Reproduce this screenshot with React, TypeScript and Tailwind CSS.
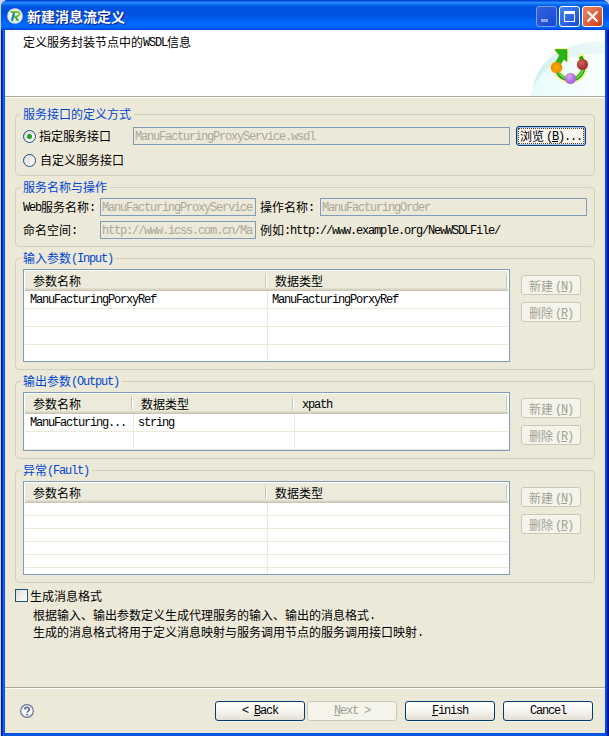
import type { ReactNode } from "react";

const cjk = "font-['Noto_Sans_CJK_SC',sans-serif]";

/* Half-width slab mono: every Latin character advances 6px. */
const latin = "font-['Liberation_Mono',monospace] text-[12px] leading-none tracking-[-1.2px] align-[1px]";

/* Chinese runs use the CJK face, Latin runs use the half-width face. */
function Mixed({ text }: { text: string }) {
  const runs = text.match(/[\x20-\x7e]+|[^\x20-\x7e]+/g) ?? [];
  return (
    <>
      {runs.map((run, i) =>
        /^[\x20-\x7e]/.test(run) ? (
          <span key={i} className={latin}>
            {run}
          </span>
        ) : (
          <span key={i}>{run}</span>
        ),
      )}
    </>
  );
}

function Group({ title, className, children }: { title: string; className: string; children: ReactNode }) {
  return (
    <section className={`ml-[10px] flex w-[580px] shrink-0 flex-col rounded-[4px] border border-[#d0d0bf] ${className}`}>
      <h2 className="-mt-[8px] ml-[5px] h-[14px] w-fit shrink-0 bg-[#ece9d8] pr-[3px] pl-[2px] leading-[14px] whitespace-pre text-[#0046d5]">
        <Mixed text={title} />
      </h2>
      {children}
    </section>
  );
}

function Field({ value, className }: { value: string; className: string }) {
  return (
    <div className={`h-[18px] shrink-0 overflow-hidden border border-[#7f9db9] pl-[1px] leading-[15px] whitespace-pre text-[#aca899] ${className}`}>
      <Mixed text={value} />
    </div>
  );
}

function Radio({ checked }: { checked?: boolean }) {
  return (
    <span className="flex size-[13px] shrink-0 items-center justify-center rounded-full border border-[#1c5180] bg-linear-to-br from-[#dcdcd7] to-white">
      {checked && <span className="size-[5px] rounded-full bg-[#21a121]" />}
    </span>
  );
}

function SideButton({ label, hotkey }: { label: string; hotkey: string }) {
  return (
    <button className="h-[20px] w-[60px] rounded-[3px] border border-[#c9c7ba] bg-[#f5f4ea] text-center leading-[17px] whitespace-pre text-[#a1a192]">
      {label}
      <span className={`ml-[2px] ${latin}`}>
        (<u>{hotkey}</u>)
      </span>
    </button>
  );
}

function SideButtons() {
  return (
    <div className="mt-[6px] ml-[11px] flex flex-col gap-[7px]">
      <SideButton label="新建" hotkey="N" />
      <SideButton label="删除" hotkey="R" />
    </div>
  );
}

type Column = { name: string; width: string };

function Table({ columns, rows, rowHeight, height }: { columns: Column[]; rows: string[][]; rowHeight: string; height: string }) {
  return (
    <div className={`flex w-[487px] shrink-0 flex-col overflow-hidden border border-[#7f9db9] bg-white px-px pt-px ${height}`}>
      <div className="flex h-[20px] shrink-0 items-center border-b border-[#cbc7b8] bg-[linear-gradient(#ebeadb_0_17px,#e2decd_17px_18px,#d6d2c2_18px)]">
        {columns.map((c, i) => (
          <div
            key={i}
            className={`flex h-[13px] shrink-0 items-center border-r border-white leading-[14px] ${c.width} ${i === 0 ? "-ml-[1px] pl-[9px]" : "pl-[8px]"}`}
          >
            <span className="flex-1 whitespace-pre">
              <Mixed text={c.name} />
            </span>
            <span className="h-[13px] w-px bg-[#c7c5b2]" />
          </div>
        ))}
      </div>
      {rows.map((row, r) => (
        <div key={r} className={`flex shrink-0 border-b border-[#ece9d8] ${rowHeight}`}>
          {columns.map((c, i) => (
            <div
              key={i}
              className={`shrink-0 leading-[16px] whitespace-pre ${c.width} ${i === 0 ? "pl-[5px]" : "pl-[4px]"} ${i < columns.length - 1 ? "border-r border-[#ece9d8]" : ""}`}
            >
              <Mixed text={row[i] ?? ""} />
            </div>
          ))}
        </div>
      ))}
    </div>
  );
}

const pairColumns: Column[] = [
  { name: "参数名称", width: "w-[243px]" },
  { name: "数据类型", width: "w-[241px]" },
];

const outputColumns: Column[] = [
  { name: "参数名称", width: "w-[109px]" },
  { name: "数据类型", width: "w-[161px]" },
  { name: "xpath", width: "w-[214px]" },
];

function WizardButton({ children, disabled, className }: { children: ReactNode; disabled?: boolean; className: string }) {
  const look = disabled
    ? "border-[#c9c7ba] bg-[#f5f4ea] text-[#a1a192]"
    : "border-[#003c74] bg-linear-to-b from-white via-[#f6f5f0] to-[#e3dfd3] text-black shadow-[0_1px_0_#f8f7f1]";
  return (
    <button
      className={`flex h-[20px] w-[90px] items-center justify-center rounded-[3px] border font-['Liberation_Mono',monospace] text-[12px] leading-[18px] tracking-[-1.2px] whitespace-pre ${look} ${className}`}
    >
      {children}
    </button>
  );
}

function AppIcon() {
  return (
    <svg width="16" height="16" viewBox="0 0 16 16" className="shrink-0">
      <circle cx="8" cy="8" r="7.8" fill="#dfe3df" />
      <circle cx="8" cy="8" r="6.6" fill="#f4f3ee" />
      <path d="M3.5 4h7.2c2.7 0 2.3 3.6-.4 4.2L7 8.7" fill="none" stroke="#7cc42c" strokeWidth="2" />
      <path d="M7 4.5 5 13" stroke="#1487a8" strokeWidth="2.2" />
      <path d="m8.5 9 2.7 3.8" stroke="#42a55c" strokeWidth="2.2" />
    </svg>
  );
}

function FlowBanner() {
  return (
    <svg width="76" height="58" viewBox="0 0 76 58" className="shrink-0">
      <defs>
        <linearGradient id="rim" x1="0" y1="1" x2="1" y2="0">
          <stop offset="0" stopColor="#c5ecef" />
          <stop offset="1" stopColor="#f0fafa" />
        </linearGradient>
        <linearGradient id="disc" x1="0" y1="0" x2="1" y2="0">
          <stop offset="0" stopColor="#e8fbfc" />
          <stop offset="1" stopColor="#fbffff" />
        </linearGradient>
        <radialGradient id="orange">
          <stop offset="0" stopColor="#ffac00" />
          <stop offset="1" stopColor="#e38c08" />
        </radialGradient>
        <radialGradient id="violet" cx="40%" cy="35%">
          <stop offset="0" stopColor="#dca6ff" />
          <stop offset="1" stopColor="#ae66e0" />
        </radialGradient>
        <radialGradient id="red" cx="40%" cy="35%">
          <stop offset="0" stopColor="#d3605c" />
          <stop offset="1" stopColor="#a93337" />
        </radialGradient>
      </defs>
      <path d="M4 51C7 24 32 3 76 3v55H2z" fill="url(#rim)" />
      <path d="M1 58C8 33 32 14 76 16v42z" fill="url(#disc)" />
      <g fill="none" stroke="#f8f6a8" strokeLinejoin="round" strokeLinecap="round">
        <path d="M28 29v2c1 8 7 11 14 11 8 0 13-7 13-14 0-4-1-6-3-9" strokeWidth="7" />
        <path d="m28 26 4-8M27 12h11v11z" strokeWidth="4" />
        <circle cx="27.500" cy="29.500" r="5.500" strokeWidth="2" />
        <circle cx="53.500" cy="26.500" r="5" strokeWidth="2" />
        <circle cx="41.500" cy="40.500" r="5" strokeWidth="2" />
      </g>
      <path d="M28 29v2c1 7 7 10.500 14 10.500 7 0 12.500-6 12.500-13 0-4-1-6-3-10" fill="none" stroke="#249f17" strokeWidth="4" />
      <path d="M29 33c2 5 7 8 13 8 7 0 12-5 12-12" fill="none" stroke="#65d94d" strokeWidth="2" />
      <path d="m26 11.500h12v12l-3-2.500-4 6-4.500-2.500 4-7z" fill="#27b416" stroke="#168f0b" strokeWidth=".5" />
      <circle cx="27.500" cy="29.500" r="5.700" fill="url(#orange)" />
      <circle cx="53.500" cy="26.500" r="5.500" fill="url(#red)" />
      <circle cx="41.500" cy="40.500" r="5.500" fill="url(#violet)" />
    </svg>
  );
}

function CaptionButtons() {
  return (
    <div className="ml-auto flex gap-[2px]">
      <span className="flex size-[21px] items-end rounded-[3px] border border-[#7c9bea] bg-linear-to-br from-[#3164dd] to-[#1847ce] pb-[4px] pl-[4px]">
        <span className="h-[3px] w-[7px] bg-[#91a6ea]" />
      </span>
      <span className="flex size-[21px] items-center justify-center rounded-[3px] border border-white bg-linear-to-br from-[#4984f4] to-[#174ad5]">
        <span className="size-[11px] border border-t-[3px] border-white" />
      </span>
      <span className="flex size-[21px] items-center justify-center rounded-[3px] border border-white bg-linear-to-br from-[#ec8366] to-[#d13c12]">
        <svg width="13" height="13" viewBox="0 0 13 13">
          <path d="m1.500 1.500 10 10m0-10-10 10" stroke="white" strokeWidth="2.200" />
        </svg>
      </span>
    </div>
  );
}

export default function App() {
  return (
    <div className={`h-[736px] w-[609px] overflow-hidden bg-[#c9d4ee] pl-px text-[12px] text-black ${cjk}`}>
      <div className="flex h-[736px] w-[608px] flex-col rounded-t-[7px] bg-[linear-gradient(90deg,#001ea0_0_1px,#0831d9_1px_2px,#166aee_2px_3px,#0855dd_3px_4px,#0855dd_4px_604px,#0048f1_604px_606px,#001da0_606px_607px,#00138c_607px)]">
        <header className="flex h-[30px] shrink-0 items-center rounded-t-[7px] bg-[linear-gradient(#0831c9_0,#0058e6_1px,#3a93ff_3px,#0873f2_4px,#0055e5_7px,#0050dc_10px,#0055e5_16px,#0064fa_22px,#006aff_26px,#0060f4_28px,#003dd7_30px)] pt-[2px] pr-[6px] pl-[6px]">
          <AppIcon />
          <h1 className="ml-[4px] text-[14px] leading-[20px] font-bold text-white [text-shadow:1px_1px_0_#0a1883]">新建消息流定义</h1>
          <CaptionButtons />
        </header>

        <main className="ml-[4px] flex h-[703px] w-[600px] shrink-0 flex-col bg-[#ece9d8]">
          <div className="h-[68px] shrink-0 border-b border-white bg-white">
            <div className="flex h-[67px] w-full justify-between border-b border-[#aca899]">
              <p className="pt-[4px] pl-[18px] leading-[16px] whitespace-pre">
                <Mixed text="定义服务封装节点中的WSDL信息" />
              </p>
              <div className="mt-[8px] h-[58px]">
                <FlowBanner />
              </div>
            </div>
          </div>

          <Group title="服务接口的定义方式" className="mt-[16px] h-[62px]">
            <div className="mt-[5px] flex h-[20px] items-center pl-[7px]">
              <Radio checked />
              <span className="ml-[3px] w-[94px] leading-[18px]">指定服务接口</span>
              <Field value="ManuFacturingProxyService.wsdl" className="w-[377px]" />
              <button className="ml-[6px] flex h-[20px] w-[70px] items-center justify-center rounded-[3px] border border-[#003c74] bg-[#a3bcec] p-[1px] shadow-[0_1px_0_#f8f7f1]">
                <span className="h-[16px] w-full border border-dotted border-[#5c3d20] bg-[#f6f5f0] text-center leading-[14px] whitespace-pre">
                  浏览
                  <span className={`ml-[2px] ${latin}`}>
                    (<u>B</u>)...
                  </span>
                </span>
              </button>
            </div>
            <div className="mt-[5px] flex h-[18px] items-center gap-[4px] pl-[7px]">
              <Radio />
              <span>自定义服务接口</span>
            </div>
          </Group>

          <Group title="服务名称与操作" className="mt-[11px] h-[60px]">
            <div className="mt-[4px] flex h-[18px] shrink-0 items-center pl-[7px] leading-[18px] whitespace-pre">
              <span className="w-[77px]">
                <Mixed text="Web服务名称:" />
              </span>
              <Field value="ManuFacturingProxyService" className="w-[156px]" />
              <span className="ml-[4px] w-[60px]">
                <Mixed text="操作名称:" />
              </span>
              <Field value="ManuFacturingOrder" className="w-[267px]" />
            </div>
            <div className="mt-[5px] flex h-[18px] shrink-0 items-center pl-[7px] leading-[18px] whitespace-pre">
              <span className="w-[77px]">
                <Mixed text="命名空间:" />
              </span>
              <Field value="http://www.icss.com.cn/Ma" className="w-[156px]" />
              <span className="ml-[4px]">
                <Mixed text="例如:http://www.example.org/NewWSDLFile/" />
              </span>
            </div>
          </Group>

          <Group title="输入参数(Input)" className="mt-[11px] h-[112px]">
            <div className="mt-[4px] flex pl-[7px]">
              <Table
                columns={pairColumns}
                rows={[["ManuFacturingPorxyRef", "ManuFacturingPorxyRef"], [], [], []]}
                rowHeight="h-[18px]"
                height="h-[93px]"
              />
              <SideButtons />
            </div>
          </Group>

          <Group title="输出参数(Output)" className="mt-[11px] h-[78px]">
            <div className="mt-[4px] flex pl-[7px]">
              <Table columns={outputColumns} rows={[["ManuFacturing...", "string"], []]} rowHeight="h-[18px]" height="h-[59px]" />
              <SideButtons />
            </div>
          </Group>

          <Group title="异常(Fault)" className="mt-[11px] h-[113px]">
            <div className="mt-[4px] flex pl-[7px]">
              <Table columns={pairColumns} rows={[[], [], [], [], [], []]} rowHeight="h-[13px]" height="h-[94px]" />
              <SideButtons />
            </div>
          </Group>

          <div className="mt-[6px] ml-[10px] flex h-[13px] shrink-0 items-center gap-[2px] leading-[13px]">
            <span className="size-[13px] border border-[#1c5180] bg-linear-to-br from-[#dcdcd7] to-white" />
            <span>生成消息格式</span>
          </div>
          <div className="mt-[4px] ml-[28px] shrink-0 leading-[17px] whitespace-pre">
            <p className="h-[17px]">
              <Mixed text="根据输入、输出参数定义生成代理服务的输入、输出的消息格式." />
            </p>
            <p className="h-[17px]">
              <Mixed text="生成的消息格式将用于定义消息映射与服务调用节点的服务调用接口映射." />
            </p>
          </div>

          <footer className="mt-auto flex h-[46px] shrink-0 items-start border-t border-[#aca899]">
            <div className="flex w-full border-t border-white pt-[12px] pl-[15px]">
              <svg width="14" height="14" viewBox="0 0 14 14" className="mt-[3px]">
                <circle cx="7" cy="7" r="6.300" fill="#fbfbfb" stroke="#667294" strokeWidth="1.200" />
                <path d="M4.700 5.600c0-3 4.700-2.800 4.700-.3C9.400 7 7.200 6.800 7.200 8.700" fill="none" stroke="#55699c" strokeWidth="1.700" />
                <circle cx="7.200" cy="10.700" r="1" fill="#55699c" />
              </svg>
              <WizardButton className="ml-[181px]">
                &lt; <u>B</u>ack
              </WizardButton>
              <WizardButton disabled className="ml-[2px]">
                <u>N</u>ext &gt;
              </WizardButton>
              <WizardButton className="ml-[8px]">
                <u>F</u>inish
              </WizardButton>
              <WizardButton className="ml-[8px]">Cancel</WizardButton>
            </div>
          </footer>
        </main>
      </div>
    </div>
  );
}
